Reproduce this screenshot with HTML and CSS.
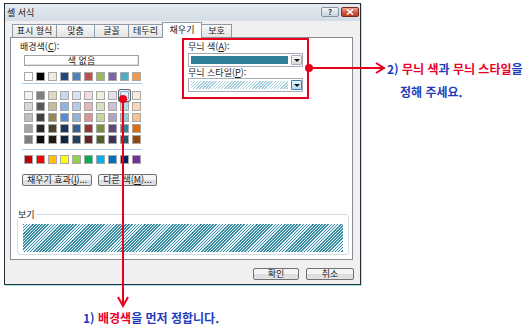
FILE: index.html
```html
<!DOCTYPE html>
<html lang="ko">
<head>
    <meta charset="UTF-8">
    <title>셀 서식</title>
    <link rel="stylesheet" href="styles.css">
</head>
<body>
    <div class="stage">
        <div class="scene">
            <div class="dialog">
                <div class="titlebar">
                    <span class="title">셀 서식</span>
                    <div class="caption-btns">
                        <span class="cbtn help">?</span>
                        <span class="cbtn close">
                            <svg width="8" height="6" viewBox="0 0 8 6"><path d="M1 0.5 L7 5.5 M7 0.5 L1 5.5" stroke="#fff" stroke-width="1.6"/></svg>
                        </span>
                    </div>
                </div>
                <div class="tabs">
                    <span class="tab">표시 형식</span>
                    <span class="tab">맞춤</span>
                    <span class="tab">글꼴</span>
                    <span class="tab">테두리</span>
                    <span class="tab active">채우기</span>
                    <span class="tab">보호</span>
                </div>
                <div class="panel">
                    <div class="panel-top">
                        <div class="bg-col">
                            <div class="label">배경색(<u>C</u>):</div>
                            <div class="none-btn">색 없음</div>
                            <div class="swatch-row" id="theme"></div>
                            <div class="sep"></div>
                            <div class="swatch-grid" id="tints"></div>
                            <div class="sep sep-low"></div>
                            <div class="swatch-row std" id="standard"></div>
                            <div class="col-btns">
                                <button class="btn fx">채우기 효과(<u>I</u>)...</button>
                                <button class="btn more">다른 색(<u>M</u>)...</button>
                            </div>
                        </div>
                        <div class="pattern-box">
                            <div class="label">무늬 색(<u>A</u>):</div>
                            <div class="combo">
                                <span class="combo-field solid"></span>
                                <span class="drop"></span>
                            </div>
                            <div class="label">무늬 스타일(<u>P</u>):</div>
                            <div class="combo">
                                <span class="combo-field light-hatch"></span>
                                <span class="drop hot"></span>
                            </div>
                        </div>
                    </div>
                    <fieldset class="preview">
                        <legend>보기</legend>
                        <div class="hatch"></div>
                    </fieldset>
                </div>
                <div class="actions">
                    <button class="btn ok">확인</button>
                    <button class="btn cancel">취소</button>
                </div>
            </div>
            <div class="note">
                <p><span class="blue">2)</span> <em>무늬 색</em><span class="blue">과</span> <em>무늬 스타일</em><span class="blue">을</span></p>
                <p class="indent blue">정해 주세요.</p>
            </div>
        </div>
        <p class="caption"><span class="blue">1)</span> <em>배경색</em><span class="blue">을 먼저 정합니다.</span></p>

        <!-- annotation arrows -->
        <svg class="marks" width="529" height="328" viewBox="0 0 529 328">
            <g stroke="#e8001c" stroke-width="2" fill="none">
                <line x1="309" y1="68" x2="384" y2="68"/>
                <polyline points="376,63 384,68 376,73"/>
                <line x1="123" y1="99" x2="123" y2="305"/>
                <polyline points="118,297 123,306 128,297"/>
            </g>
            <circle cx="309" cy="68" r="4" fill="#e8001c"/>
            <circle cx="123" cy="99" r="4" fill="#e8001c"/>
        </svg>
    </div>

    <script>
        const theme = ['#FFFFFF','#000000','#EEECE1','#1F497D','#4F81BD','#C0504D','#9BBB59','#8064A2','#4BACC6','#F79646'];
        const tints = [
            '#F2F2F2','#7F7F7F','#DDD9C3','#C6D9F0','#DBE5F1','#F2DCDB','#EBF1DD','#E5E0EC','#DBEEF3','#FDEADA',
            '#D8D8D8','#595959','#C4BD97','#8DB3E2','#B8CCE4','#E5B9B7','#D7E3BC','#CCC1D9','#B7DDE8','#FBD5B5',
            '#BFBFBF','#3F3F3F','#938953','#548DD4','#95B3D7','#D99694','#C3D69B','#B2A2C7','#92CDDC','#FAC08F',
            '#A5A5A5','#262626','#494429','#17365D','#366092','#953734','#76923C','#5F497A','#31859B','#E36C09',
            '#7F7F7F','#0C0C0C','#1D1B10','#0F243E','#244061','#632423','#4F6128','#3F3151','#205867','#974806'
        ];
        const standard = ['#C00000','#FF0000','#FFC000','#FFFF00','#92D050','#00B050','#00B0F0','#0070C0','#002060','#7030A0'];

        function fill(id, colors, selected) {
            const el = document.getElementById(id);
            colors.forEach((c, i) => {
                const s = document.createElement('span');
                s.className = 'swatch';
                if (i === selected) s.classList.add('selected');
                s.style.background = c;
                el.appendChild(s);
            });
        }

        fill('theme', theme);
        fill('tints', tints, 8);
        fill('standard', standard);
    </script>
</body>
</html>
```

FILE: styles.css
```css
* {
    margin: 0;
    padding: 0;
    box-sizing: border-box;
}

body {
    background: #fff;
    font-family: "Noto Sans CJK KR", "Noto Sans", sans-serif;
    color: #1a1a1a;
}

.stage {
    position: relative;
    width: 529px;
    height: 328px;
    overflow: hidden;
}

.scene {
    display: flex;
    align-items: flex-start;
}

/* dialog window */
.dialog {
    margin: 3px 0 0 4px;
    width: 357px;
    height: 282px;
    border: 1px solid #2a2f36;
    box-shadow: 1px 1px 0 #9ee6f0;
    background: #f0f0f0;
    display: flex;
    flex-direction: column;
    font-size: 9px;
}

.titlebar {
    height: 17px;
    display: flex;
    align-items: flex-start;
    padding-left: 2px;
    background: linear-gradient(#e4eaf0, #d4dce5);
}

.title {
    line-height: 17px;
    color: #222;
}

.caption-btns {
    margin: 3px 1px 0 auto;
    display: flex;
    gap: 2px;
}

.cbtn {
    width: 18px;
    height: 10px;
    border-radius: 2px;
    display: flex;
    justify-content: center;
    align-items: center;
}

.help {
    border: 1px solid #8592a3;
    background: linear-gradient(#f3f6f9, #c8d2dd);
    font-size: 8px;
    font-weight: bold;
    line-height: 8px;
    color: #3a4654;
}

.close {
    border: 1px solid #7c2a1e;
    background: linear-gradient(#eba999, #d0563f 55%, #c0402c);
}

/* tabs */
.tabs {
    height: 16px;
    display: flex;
    align-items: flex-end;
    padding-left: 7px;
    position: relative;
    z-index: 1;
}

.tab {
    height: 13px;
    border: 1px solid #8e9aa6;
    border-bottom: none;
    margin-right: -1px;
    background: linear-gradient(#f8f8f8, #e4e4e4);
    line-height: 11px;
    text-align: center;
    white-space: nowrap;
}

.tab:nth-child(1) { width: 45px; }
.tab:nth-child(2) { width: 39px; }
.tab:nth-child(3) { width: 35px; }
.tab:nth-child(4) { width: 35px; }
.tab:nth-child(6) { width: 31px; }

.tab.active {
    width: 40px;
    height: 16px;
    margin-bottom: -1px;
    background: #fff;
    line-height: 14px;
    position: relative;
    z-index: 2;
}

/* tab page */
.panel {
    margin: 0 7px 0 5px;
    height: 223px;
    border: 1px solid #898c95;
    background: #fff;
    display: flex;
    flex-direction: column;
}

.panel-top {
    display: flex;
    padding-left: 9px;
}

.bg-col {
    width: 150px;
    padding-top: 3px;
}

.label {
    line-height: 11px;
    white-space: nowrap;
}

.none-btn {
    margin: 3px 0 0 4px;
    width: 115px;
    height: 11px;
    border: 1px solid #a3a3a3;
    box-shadow: inset -1px -1px 0 #e0e0e0;
    text-align: center;
    line-height: 9px;
}

.swatch-row {
    display: flex;
    gap: 3px;
    margin: 6px 0 0 4px;
}

.swatch-row.std {
    margin-top: 5px;
}

.swatch-grid {
    display: grid;
    grid-template-columns: repeat(10, 9px);
    column-gap: 3px;
    row-gap: 2px;
    margin: 7px 0 0 4px;
}

.swatch {
    width: 9px;
    height: 9px;
    border: 1px solid #a8a8a8;
}

.swatch.selected {
    border-color: #8aa4b8;
    box-shadow: 0 0 0 1px #eaf6fb, 0 0 0 2px #5c6670;
    border-radius: 1px;
}

.sep {
    width: 120px;
    height: 1px;
    margin: 2px 0 0 2px;
    background: #a9cbe9;
}

.sep-low {
    margin-top: 5px;
}

.col-btns {
    display: flex;
    gap: 6px;
    margin: 10px 0 0 2px;
}

.btn {
    height: 12px;
    border: 1px solid #707070;
    border-radius: 2px;
    background: linear-gradient(#f4f4f4 45%, #dcdcdc 55%, #e4e4e4);
    font-family: inherit;
    font-size: 9px;
    line-height: 10px;
    color: #1a1a1a;
    white-space: nowrap;
}

.btn.fx { width: 70px; }
.btn.more { width: 59px; }
.btn.ok { width: 46px; }
.btn.cancel { width: 48px; }

/* highlighted pattern fields */
.pattern-box {
    margin-left: 12px;
    width: 127px;
    height: 61px;
    border: 2px solid #e8001c;
    padding: 1px 0 0 4px;
}

.combo {
    width: 115px;
    height: 14px;
    margin-top: 1px;
    border: 1px solid #a5acb5;
    background: #fff;
    display: flex;
    padding: 1px 0 1px 2px;
}

.label + .combo:last-child {
    margin-top: 0;
}

.combo-field {
    flex: 1;
    margin: 1px 3px 1px 0;
}

.combo-field.solid {
    background: #2e8098;
}

.combo-field.light-hatch {
    background: repeating-linear-gradient(135deg, #a7d0de 0 1.1px, #fff 1.1px 2.2px);
}

.drop {
    width: 11px;
    border: 1px solid #a9b1ba;
    border-radius: 1px;
    background: linear-gradient(#f5f5f5, #d9d9d9);
    display: flex;
    justify-content: center;
    align-items: center;
}

.drop::after {
    content: "";
    border-left: 3px solid transparent;
    border-right: 3px solid transparent;
    border-top: 3px solid #111;
}

.drop.hot {
    border-color: #3c7fb1;
    background: linear-gradient(#e8f5fd, #b6dcf3);
}

/* preview group */
.preview {
    margin: auto 3px 4px 6px;
    border: 1px solid #d3dde4;
    border-radius: 3px;
    padding: 4px 5px 2px;
}

.preview legend {
    margin-left: -6px;
    padding: 0 1px;
    line-height: 11px;
}

.hatch {
    height: 28px;
    background: repeating-linear-gradient(135deg, #3a8ca3 0 1.2px, #e2f2f6 1.2px 2.2px);
}

.actions {
    display: flex;
    justify-content: flex-end;
    gap: 7px;
    margin: 8px 6px 0 0;
}

/* annotations */
.note {
    margin-left: 26px;
    padding-top: 57px;
    font-size: 12px;
    font-weight: bold;
    line-height: 23px;
    white-space: nowrap;
}

.note em,
.caption em {
    font-style: normal;
    color: #e8002a;
}

.blue {
    color: #1f3cbc;
}

.indent {
    padding-left: 13px;
}

.caption {
    margin-top: 25px;
    padding-left: 83px;
    font-size: 12px;
    font-weight: bold;
    line-height: 16px;
}

.marks {
    position: absolute;
    top: 0;
    left: 0;
    pointer-events: none;
}
```
